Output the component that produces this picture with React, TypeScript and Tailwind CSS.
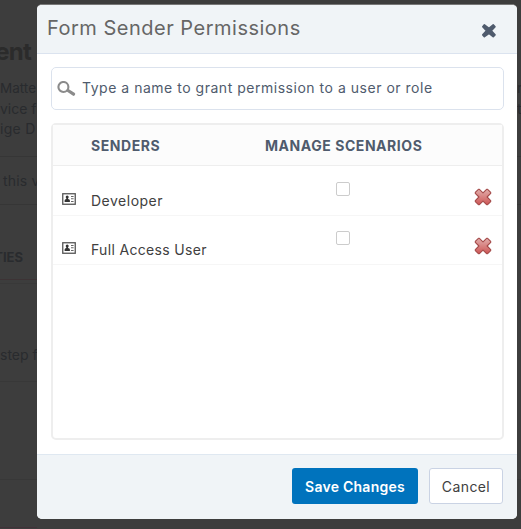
import React from "react";

const senders = [
  { name: "Developer", spacing: "tracking-[0.5px]" },
  { name: "Full Access User", spacing: "tracking-[0.33px]" },
];

function SearchIcon() {
  return (
    <svg width="19" height="16" viewBox="0 0 19 16" fill="none" stroke="#8b8b8b">
      <circle cx="6.4" cy="6" r="5" strokeWidth="2.1" />
      <path d="M11 9.5 16.6 13.2" strokeWidth="3.2" strokeLinecap="round" />
    </svg>
  );
}

function CardIcon() {
  return (
    <svg width="14" height="12" viewBox="0 0 14 12">
      <rect x="0.75" y="0.75" width="12.5" height="10.5" fill="#fff" stroke="#555" strokeWidth="1.3" />
      <circle cx="5.2" cy="4" r="1.5" fill="#333" />
      <path d="M2.6 9V7.5Q2.6 6.2 4.4 6V5H6v1q1.9.2 1.9 1.5V9z" fill="#333" />
      <path d="M9 3h2.6v1H9zM9 5.3h2.6v1H9zM9 8h2.6v1H9z" fill="#666" />
    </svg>
  );
}

function CloseIcon() {
  return (
    <svg width="16" height="16" viewBox="0 0 16 16" stroke="#4f5b6d" strokeWidth="1.6" strokeLinejoin="round" fill="#4f5b6d">
      <path d="M3.4 1.9 8 5.3 12.2 1.9 14 3.7 10.3 7.8 14 11.9 12.2 13.7 8 10.3 3.4 13.7 1.8 11.9 5.5 7.8 1.8 3.7Z" />
    </svg>
  );
}

function DeleteIcon() {
  const cross =
    "M4.4 1.3H5.4L9 4.9 12.6 1.3H13.6L16.7 4.4V5.4L13.1 9 16.7 12.6V13.6L13.6 16.7H12.6L9 13.1 5.4 16.7H4.4L1.3 13.6V12.6L4.9 9 1.3 5.4V4.4Z";
  return (
    <svg width="18" height="18" viewBox="0 0 18 18">
      <defs>
        <linearGradient id="cross" x1="0" y1="2" x2="0" y2="16" gradientUnits="userSpaceOnUse">
          <stop offset="0" stopColor="#e0aaa8" />
          <stop offset="1" stopColor="#cf5a59" />
        </linearGradient>
      </defs>
      <path d={cross} fill="url(#cross)" stroke="#a44a49" strokeWidth="1.1" strokeLinejoin="round" />
    </svg>
  );
}

function Backdrop() {
  return (
    <div className="flex h-full justify-between overflow-hidden whitespace-nowrap bg-[#3d3d3d] text-sm text-[#292b2e]">
      <div className="flex w-[37px] flex-col">
        <div className="flex h-[78px] justify-end pt-[36px] pr-[6px] text-[24px] leading-8 font-bold tracking-[-0.8px] text-[#2b2b2b]">ent</div>
        <div className="h-[79px] border-b border-[#363636] leading-[20.5px]">
          <div className="text-[13.5px]">Matte</div>
          <div>vice fr</div>
          <div className="tracking-[0.3px]">ige D</div>
        </div>
        <div className="flex h-12 items-center border-b border-[#363636] pl-[3px] tracking-[0.2px]">this v</div>
        <div className="flex h-[75px] items-end justify-end border-b border-[#3d3335] pr-[14px] pb-3 text-[13px] font-bold">TIES</div>
        <div className="h-1 border-b border-[#393939]" />
        <div className="flex h-[98px] items-end border-b border-[#383838] pb-4">step f</div>
        <div className="h-[98px] border-b border-[#383838]" />
        <div className="h-12 border-b border-[#403238]" />
      </div>
      <div className="flex w-1 flex-col">
        <div className="h-[157px] border-b border-[#363636] pt-[78px] leading-[20.5px]">
          <div>r</div>
          <div>t</div>
        </div>
        <div className="h-12 border-b border-[#363636]" />
        <div className="h-[275px] border-b border-[#383838]" />
      </div>
    </div>
  );
}

export default function App() {
  return (
    <div className="relative h-[529px] w-[521px] overflow-hidden font-['Inter',sans-serif] text-sm">
      <Backdrop />
      <section className="absolute top-1 left-[37px] flex h-[515px] w-[480px] flex-col overflow-hidden rounded-[5px] border-t border-[#777] bg-white">
        <header className="flex h-[49px] shrink-0 items-center justify-between border-b border-[#dbe3ef] bg-[#f0f4f7] pr-5 pl-[10px]">
          <h1 className="-mt-[3px] text-[20px] leading-7 tracking-[0.5px] text-[#666]">Form Sender Permissions</h1>
          <button className="pt-[3px]" aria-label="Close"><CloseIcon /></button>
        </header>
        <main className="flex flex-1 flex-col gap-[13px] px-[14px] pt-[13px]">
          <label className="flex h-[43px] w-[453px] items-center gap-[6px] rounded-[5px] border border-[#dbe2ed] pl-[5px]">
            <SearchIcon />
            <span className="-mt-0.5 tracking-[0.52px] text-[#4f5b6d]">Type a name to grant permission to a user or role</span>
          </label>
          <div className="h-[317px] w-[453px] rounded-[5px] border-2 border-[#eee] bg-white">
            <div className="mb-px flex h-[41px] items-center border-b border-[#eee] bg-[#fcfcfc] pt-px pl-[38px] font-bold text-[#4f5b6d]">
              <span className="w-[174px] tracking-[0.55px]">SENDERS</span>
              <span className="tracking-[0.55px]">MANAGE SCENARIOS</span>
            </div>
            {senders.map(({ name, spacing }) => (
              <div key={name} className="flex h-[49px] border-b border-[#f6f6f6]">
                <div className="w-[38px] pt-[26px] pl-[9px]"><CardIcon /></div>
                <div className={`w-[245px] pt-[24px] leading-5 text-[#404040] ${spacing}`}>{name}</div>
                <div className="w-[138px] pt-[15px]"><div className="size-[14px] rounded-[2px] border border-[#ccc]" /></div>
                <button className="flex items-start pt-[21px]" aria-label={`Remove ${name}`}><DeleteIcon /></button>
              </div>
            ))}
          </div>
        </main>
        <footer className="flex h-[65px] shrink-0 justify-end gap-[11px] border-t border-[#dfe8f1] bg-[#f0f4f7] pt-[13px] pr-[14px]">
          <button className="h-9 w-[126px] rounded-[3px] bg-[#0073bd] pt-0.5 font-semibold tracking-[0.25px] text-white">Save Changes</button>
          <button className="h-9 w-[74px] rounded-[3px] border border-[#cad3e4] bg-white pt-0.5 tracking-[0.4px] text-[#404040]">Cancel</button>
        </footer>
      </section>
    </div>
  );
}
